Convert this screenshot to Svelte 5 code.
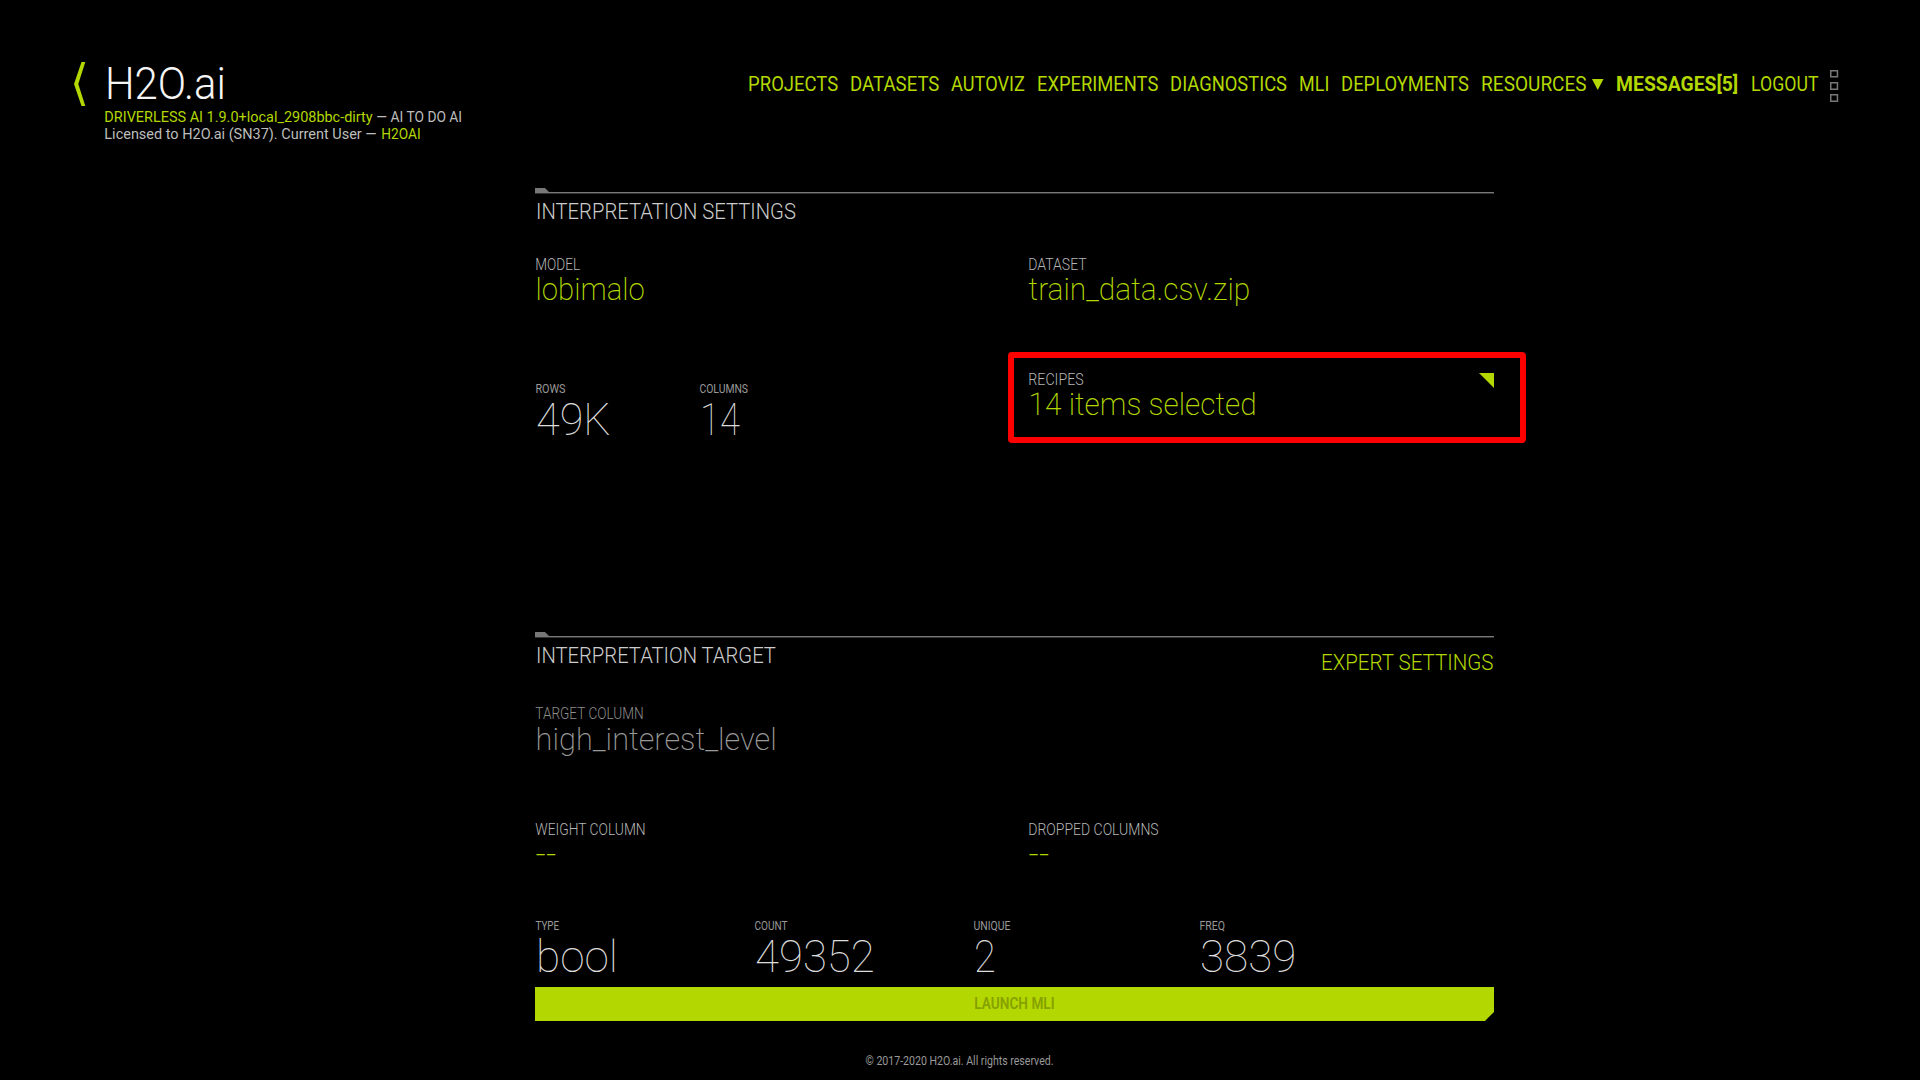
<script>
  const nav = [
    { label: 'PROJECTS', width: 88.4 },
    { label: 'DATASETS', width: 87.6 },
    { label: 'AUTOVIZ', width: 72 },
    { label: 'EXPERIMENTS', width: 119.5 },
    { label: 'DIAGNOSTICS', width: 115.2 },
    { label: 'MLI', width: 28.5 },
    { label: 'DEPLOYMENTS', width: 126 },
    { label: 'RESOURCES', width: 103.8, menu: true },
    { label: 'MESSAGES[5]', width: 120.4, strong: true },
    { label: 'LOGOUT', width: 65.8 }
  ];

  const targetStats = [
    { label: 'TYPE', labelWidth: 22.5, value: 'bool', width: 78 },
    { label: 'COUNT', labelWidth: 32, value: '49352', width: 116 },
    { label: 'UNIQUE', labelWidth: 36, value: '2', width: 18 },
    { label: 'FREQ', labelWidth: 24.5, value: '3839', width: 92.5 }
  ];
</script>

<!-- A run of text set to a fixed measure, in the condensed display style -->
{#snippet line(text, width, size, cls)}
  <svg class="line {cls}" {width} height={size}>
    <text
      x={-size * 0.045}
      y={size * 0.85}
      font-size={size}
      textLength={width + size * 0.085}
      lengthAdjust="spacingAndGlyphs">{text}</text>
  </svg>
{/snippet}

{#snippet rule()}
  <svg class="rule" width="959" height="6">
    <path d="M0 0H10L14 4H959V5H0Z" fill="#777" />
    <path d="M0 5H959V6H0Z" fill="#333" />
  </svg>
{/snippet}

{#snippet stat(label, labelWidth, value, width)}
  <div class="stat">
    {@render line(label, labelWidth, 12, 'label small')}
    {@render line(value, width, 45, 'figure')}
  </div>
{/snippet}

<div class="page">
  <header>
    <div class="brand">
      <svg class="back" width="12" height="44" viewBox="0 0 12 44">
        <path d="M7.5 0H11.3L4.3 22L11.3 44H7.5L0 22Z" fill="#b3d700" />
      </svg>
      <div class="titles">
        {@render line('H2O.ai', 117, 45, 'logo')}
        <div class="meta first">
          {@render line('DRIVERLESS AI 1.9.0+local_2908bbc-dirty', 267, 15, 'green')}
          {@render line('— AI TO DO AI', 84.5, 15, 'grey')}
        </div>
        <div class="meta">
          {@render line('Licensed to H2O.ai (SN37). Current User —', 271, 15, 'grey')}
          {@render line('H2OAI', 38, 15, 'green')}
        </div>
      </div>
    </div>
    <nav>
      {#each nav as item}
        <span class="item">
          {@render line(item.label, item.width, 20, item.strong ? 'green strong' : 'green')}
          {#if item.menu}
            <svg class="caret" width="11.5" height="11"><path d="M0 0H11.5L5.75 11Z" fill="#b3d700" /></svg>
          {/if}
        </span>
      {/each}
      <svg class="dots" width="9" height="32" fill="none" stroke="#777" stroke-width="1.5">
        <rect x=".75" y=".75" width="6.7" height="6" />
        <rect x=".75" y="12.75" width="6.7" height="6.5" />
        <rect x=".75" y="24.75" width="6.7" height="6.5" />
      </svg>
    </nav>
  </header>

  <main>
    <section class="settings">
      {@render rule()}
      <div class="heading">{@render line('INTERPRETATION SETTINGS', 258, 22.5, 'title')}</div>
      <div class="pair first">
        <div class="field">
          {@render line('MODEL', 43.5, 16, 'label')}
          {@render line('lobimalo', 106.5, 31, 'value')}
        </div>
        <div class="field">
          {@render line('DATASET', 57, 16, 'label')}
          {@render line('train_data.csv.zip', 219, 31, 'value')}
        </div>
      </div>
      <div class="pair second">
        <div class="stats">
          {@render stat('ROWS', 29, '49K', 71)}
          {@render stat('COLUMNS', 47.5, '14', 36)}
        </div>
        <div class="field recipes">
          {@render line('RECIPES', 54, 16, 'label')}
          {@render line('14 items selected', 225.5, 31, 'value')}
          <svg class="corner" width="15.5" height="15.5"><path d="M0 0H15.5V15.5Z" fill="#b3d700" /></svg>
          <div class="highlight"></div>
        </div>
      </div>
    </section>

    <section>
      {@render rule()}
      <div class="heading">
        {@render line('INTERPRETATION TARGET', 238, 22.5, 'title')}
        {@render line('EXPERT SETTINGS', 170.5, 22.5, 'expert')}
      </div>
      <div class="field target">
        {@render line('TARGET COLUMN', 107, 16, 'label dim')}
        {@render line('high_interest_level', 238.5, 31, 'value dim')}
      </div>
      <div class="pair columns">
        <div class="field">
          {@render line('WEIGHT COLUMN', 109, 16, 'label')}
          {@render line('--', 18, 31, 'value')}
        </div>
        <div class="field">
          {@render line('DROPPED COLUMNS', 129, 16, 'label')}
          {@render line('--', 18, 31, 'value')}
        </div>
      </div>
      <div class="target-stats">
        {#each targetStats as s}
          {@render stat(s.label, s.labelWidth, s.value, s.width)}
        {/each}
      </div>
      <button>{@render line('LAUNCH MLI', 79, 16, 'launch')}</button>
    </section>
  </main>

  <footer>{@render line('© 2017-2020 H2O.ai. All rights reserved.', 187, 12, 'label small')}</footer>
</div>

<style>
  :global(body) {
    background: #000;
  }
  .page {
    box-sizing: border-box;
    width: 1920px;
    height: 1080px;
    background: #000;
    overflow: hidden;
    font-family: Roboto, 'Liberation Sans', sans-serif;
  }
  svg {
    display: block;
    flex: none;
  }
  .line {
    overflow: visible;
    fill: #bbb;
  }
  .green {
    fill: #b3d700;
  }
  .strong {
    font-weight: 700;
  }
  .grey {
    fill: #bdbdbd;
  }
  .logo {
    fill: #f5f5f5;
    font-weight: 300;
    margin-left: 2.5px;
  }
  .title {
    fill: #ccc;
    font-weight: 300;
  }
  .expert {
    fill: #b3d700;
    font-weight: 300;
    margin-top: 7px;
  }
  .label {
    fill: #b5b5b5;
    font-weight: 300;
  }
  .small {
    fill: #999;
    font-weight: 400;
  }
  .value {
    fill: #b3d700;
    font-weight: 200;
    margin-left: 1px;
  }
  .label.dim {
    fill: #8c8c8c;
  }
  .value.dim {
    fill: #999;
  }
  .figure {
    fill: #dcdcdc;
    font-weight: 100;
    margin-left: 1.5px;
  }
  .launch {
    fill: #86a100;
    font-weight: 600;
    margin-bottom: 1.5px;
  }

  header {
    box-sizing: border-box;
    height: 188px;
    padding: 61px 81px 0 74px;
    display: flex;
    justify-content: space-between;
    align-items: flex-start;
  }
  .brand {
    display: flex;
    gap: 18.5px;
  }
  .back {
    margin-top: 1px;
  }
  .meta {
    display: flex;
    gap: 6px;
    margin-top: 2px;
  }
  .meta.first {
    gap: 5.5px;
    margin-top: 3.2px;
  }
  nav {
    display: flex;
    gap: 13.7px;
    margin-top: 9px;
    align-items: flex-start;
  }
  .item {
    display: flex;
    gap: 6.5px;
    margin-top: 4.3px;
  }
  .caret {
    margin-top: 5.2px;
  }
  .dots {
    margin-left: -1px;
  }

  main {
    width: 959px;
    margin-left: 535px;
  }
  .settings {
    height: 444px;
  }
  .heading {
    display: flex;
    justify-content: space-between;
    align-items: flex-start;
    padding: 6px 1.5px 0 1.5px;
  }
  .pair {
    display: grid;
    grid-template-columns: 493px 1fr;
    padding-left: 1px;
  }
  .pair.first {
    margin-top: 33.8px;
  }
  .pair.second {
    margin-top: 66.4px;
  }
  .pair.columns {
    margin-top: 66.6px;
  }
  .field {
    display: flex;
    flex-direction: column;
    gap: 1.5px;
  }
  .target {
    margin: 31.9px 0 0 1px;
    gap: 2.3px;
  }
  .recipes {
    position: relative;
  }
  .corner {
    position: absolute;
    right: 0;
    top: 1.8px;
  }
  .highlight {
    position: absolute;
    box-sizing: border-box;
    left: -21px;
    top: -19.2px;
    width: 518px;
    height: 91px;
    border: 6px solid #f00;
    border-radius: 4px;
  }
  .stats {
    display: grid;
    grid-template-columns: 164px 1fr;
    align-content: start;
    padding-top: 12.2px;
  }
  .stat {
    display: flex;
    flex-direction: column;
    gap: 1.6px;
  }
  .target-stats {
    display: grid;
    grid-template-columns: 219px 219px 226px 1fr;
    margin: 50.6px 0 0 1px;
  }
  .target-stats .stat {
    gap: 2px;
  }
  button {
    display: flex;
    align-items: center;
    justify-content: center;
    width: 959px;
    height: 34px;
    margin: 7.5px 0 0;
    padding: 0;
    border: 0;
    font-family: inherit;
    background: #b3d700;
    clip-path: polygon(0 0, 100% 0, 100% 25px, calc(100% - 9px) 100%, 0 100%);
  }
  footer {
    margin: 34.3px 0 0 866px;
  }
</style>
